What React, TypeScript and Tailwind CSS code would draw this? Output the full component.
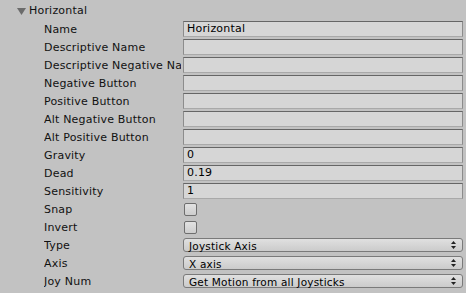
import React from 'react'

type Row =
  | { label: string; kind: 'text'; value?: string }
  | { label: string; kind: 'check' }
  | { label: string; kind: 'select'; value: string }

const rows: Row[] = [
  { label: 'Name', kind: 'text', value: 'Horizontal' },
  { label: 'Descriptive Name', kind: 'text' },
  { label: 'Descriptive Negative Name', kind: 'text' },
  { label: 'Negative Button', kind: 'text' },
  { label: 'Positive Button', kind: 'text' },
  { label: 'Alt Negative Button', kind: 'text' },
  { label: 'Alt Positive Button', kind: 'text' },
  { label: 'Gravity', kind: 'text', value: '0' },
  { label: 'Dead', kind: 'text', value: '0.19' },
  { label: 'Sensitivity', kind: 'text', value: '1' },
  { label: 'Snap', kind: 'check' },
  { label: 'Invert', kind: 'check' },
  { label: 'Type', kind: 'select', value: 'Joystick Axis' },
  { label: 'Axis', kind: 'select', value: 'X axis' },
  { label: 'Joy Num', kind: 'select', value: 'Get Motion from all Joysticks' },
]

function Field({ row }: { row: Row }) {
  if (row.kind === 'text') {
    return (
      <div className="h-[16px] flex-1 border border-[#8c8c8c] border-t-[#666666] border-b-[#a9a9a9] bg-[#d6d6d6] pl-[3px] leading-[14px] text-black">
        {row.value}
      </div>
    )
  }
  if (row.kind === 'check') {
    return (
      <div className="ml-[1px] h-[13px] w-[13px] rounded-[2px] border border-[#6e6e6e] bg-gradient-to-b from-[#e2e2e2] to-[#cdcdcd]" />
    )
  }
  return (
    <div className="flex h-[14px] flex-1 items-center rounded-[3px] border border-[#7a7a7a] bg-gradient-to-b from-[#e0e0e0] to-[#cbcbcb] pl-[5px] pr-[6px] text-[10.5px] leading-[12px] text-black">
      <span className="flex-1 pt-[1px]">{row.value}</span>
      <svg width="5" height="8" viewBox="0 0 5 8">
        <path d="M2.5 0 L5 3 L0 3 Z" fill="#222" />
        <path d="M0 5 L5 5 L2.5 8 Z" fill="#222" />
      </svg>
    </div>
  )
}

export default function App() {
  return (
    <div
      className="h-[293px] w-[466px] overflow-hidden bg-[#c2c2c2] text-[11px] tracking-[0.2px] text-[#111]"
      style={{ fontFamily: '"DejaVu Sans", Verdana, sans-serif' }}
    >
      <div className="flex h-[20px] items-start pl-[17px] pt-[4px] leading-[14px]">
        <svg width="9" height="7" viewBox="0 0 9 7" className="mr-[3px] mt-[4px]">
          <path d="M0 0 L9 0 L4.5 7 Z" fill="#6b6b6b" />
        </svg>
        <span>Horizontal</span>
      </div>
      {rows.map((row) => (
        <div key={row.label} className="flex h-[18px] items-center pr-[3px]">
          <div className="ml-[44px] w-[137px] overflow-hidden whitespace-nowrap pt-[2px] leading-[14px]">{row.label}</div>
          <div className="ml-[2px] flex flex-1 items-center">
            <Field row={row} />
          </div>
        </div>
      ))}
    </div>
  )
}
